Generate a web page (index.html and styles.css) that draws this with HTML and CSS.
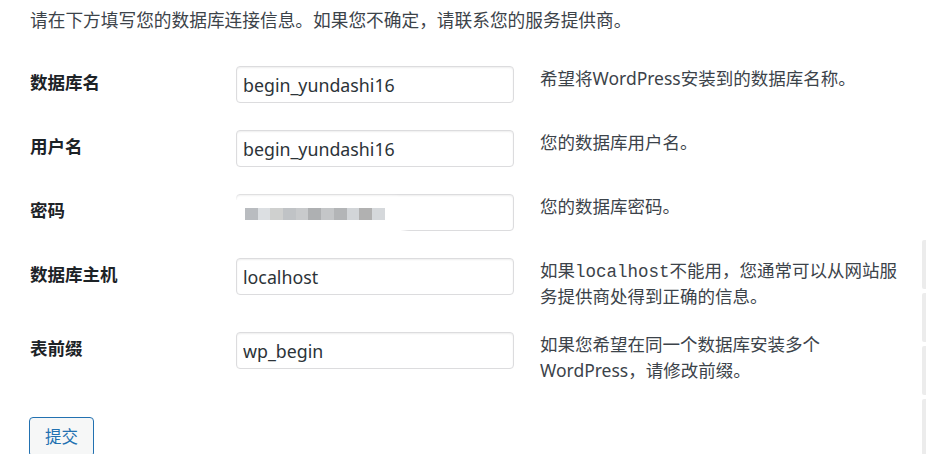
FILE: index.html
```html
<!DOCTYPE html>
<html lang="zh-CN">
<head>
<meta charset="utf-8">
<title>WordPress 安装</title>
<link rel="stylesheet" href="styles.css">
</head>
<body>
<div class="page">
  <p class="intro">请在下方填写您的数据库连接信息。如果您不确定，请联系您的服务提供商。</p>
  <form class="setup-form">
    <div class="row">
      <label class="label" for="dbname">数据库名</label>
      <div class="field"><input class="input" id="dbname" type="text" value="begin_yundashi16"></div>
      <p class="desc">希望将WordPress安装到的数据库名称。</p>
    </div>
    <div class="row">
      <label class="label" for="uname">用户名</label>
      <div class="field"><input class="input" id="uname" type="text" value="begin_yundashi16"></div>
      <p class="desc">您的数据库用户名。</p>
    </div>
    <div class="row">
      <label class="label" for="pwd">密码</label>
      <div class="field">
        <input class="input" id="pwd" type="text" value="">
        <div class="mosaic">
          <span class="cell c1"></span><span class="cell c2"></span><span class="cell c3"></span><span class="cell c4"></span><span class="cell c5"></span><span class="cell c6"></span><span class="cell c7"></span><span class="cell c8"></span><span class="cell c9"></span><span class="cell c10"></span><span class="cell c11"></span>
        </div>
      </div>
      <p class="desc">您的数据库密码。</p>
    </div>
    <div class="row">
      <label class="label" for="dbhost">数据库主机</label>
      <div class="field"><input class="input" id="dbhost" type="text" value="localhost"></div>
      <p class="desc">如果<code>localhost</code>不能用，您通常可以从网站服务提供商处得到正确的信息。</p>
    </div>
    <div class="row">
      <label class="label" for="prefix">表前缀</label>
      <div class="field"><input class="input" id="prefix" type="text" value="wp_begin"></div>
      <p class="desc">如果您希望在同一个数据库安装多个 WordPress，请修改前缀。</p>
    </div>
    <div class="actions">
      <button class="button" type="button">提交</button>
    </div>
  </form>
</div>
<div class="edge">
  <span class="edge-seg s1"></span>
  <span class="edge-seg s2"></span>
  <span class="edge-seg s3"></span>
  <span class="edge-seg s4"></span>
</div>
</body>
</html>
```

FILE: styles.css
```css
html, body {
  margin: 0;
  padding: 0;
  background: #fff;
}
body {
  font-family: "Noto Sans", "Noto Sans CJK SC", sans-serif;
  font-size: 17.5px;
  line-height: 26px;
  color: #3c434a;
  overflow: hidden;
  height: 454px;
  position: relative;
}
.page {
  padding: 7px 0 0 30px;
}
.intro {
  margin: 0;
  white-space: nowrap;
  font-size: 17.7px;
}
.setup-form {
  margin-top: 33px;
}
.row {
  display: grid;
  grid-template-columns: 206px 278px 390px;
  min-height: 64px;
  align-items: start;
}
.label {
  font-family: "Noto Sans CJK SC", sans-serif;
  font-weight: 700;
  color: #1d2327;
  margin-top: 3px;
}
.field {
  position: relative;
  height: 37px;
}
.input {
  box-sizing: border-box;
  width: 278px;
  height: 37px;
  margin: 0;
  padding: 0 6px;
  border: 1.5px solid #dcdcde;
  border-radius: 4px;
  box-shadow: inset 0 1px 2px rgba(0, 0, 0, 0.07);
  font-family: "Noto Sans", "Noto Sans CJK SC", sans-serif;
  font-size: 17.8px;
  color: #2c3338;
  background: #fff;
  outline: none;
}
.desc {
  margin: -1px 0 0 26px;
  padding-bottom: 23px;
  width: 364px;
}
.desc code {
  font-family: "Liberation Mono", monospace;
  font-size: 17.5px;
  line-height: 1;
  color: #3c434a;
}
.mosaic {
  position: absolute;
  left: -4px;
  top: 6px;
  width: 174px;
  height: 34px;
  background: #fff;
  border-radius: 2px 14px 14px 2px;
  box-shadow: 0 0 4px 3px rgba(255, 255, 255, 0.9);
  display: flex;
  align-items: flex-start;
  padding: 8px 0 0 13px;
  box-sizing: border-box;
}
.cell {
  display: block;
  width: 12.7px;
  height: 12px;
}
.c1 { background: #b9bcc0; }
.c2 { background: #dcdfe2; }
.c3 { background: #cfd0cf; }
.c4 { background: #c0c3c6; }
.c5 { background: #c8cacc; }
.c6 { background: #aeb0b2; }
.c7 { background: #c4c6c8; }
.c8 { background: #b3b5b7; }
.c9 { background: #d2d5d8; }
.c10 { background: #b1b1b1; }
.c11 { background: #d5d8db; }
.actions {
  margin-top: 11px;
}
.button {
  box-sizing: border-box;
  width: 65px;
  height: 40px;
  padding: 0 0 2px;
  border: 1.5px solid #2271b1;
  border-radius: 4px;
  background: #f6f7f7;
  color: #2271b1;
  font-family: "Noto Sans CJK SC", sans-serif;
  font-size: 16.5px;
  line-height: 36px;
  margin-left: -1px;
  cursor: pointer;
}
.edge {
  position: absolute;
  right: 0;
  top: 240px;
  width: 4px;
  display: flex;
  flex-direction: column;
  gap: 4px;
}
.edge-seg {
  display: block;
  height: 49px;
  background: #ececec;
  border-radius: 2px 0 0 2px;
}
.s4 { height: 56px; }
```
